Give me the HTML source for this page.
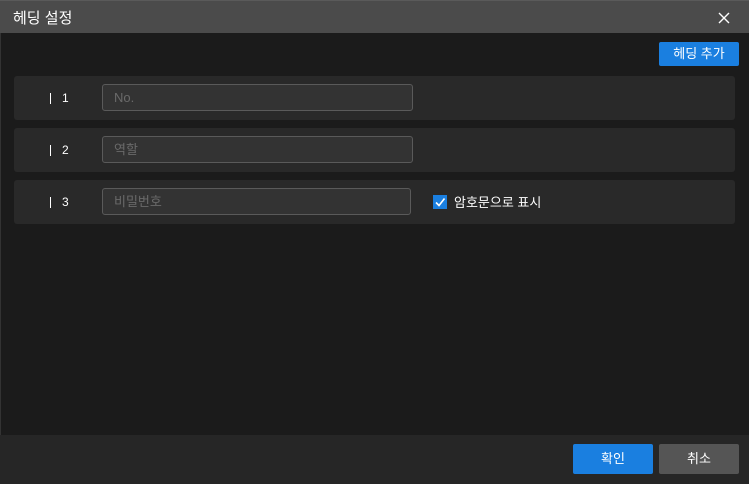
<!DOCTYPE html>
<html><head><meta charset="utf-8"><style>
body{margin:0;width:749px;height:484px;background:#1b1b1b;font-family:"Liberation Sans","Noto Sans CJK KR",sans-serif;position:relative;overflow:hidden;color:#fff}
.title{position:absolute;left:0;top:0;width:749px;height:33px;background:#4b4b4b;border-top:1px solid #5a5a5a;box-sizing:border-box}
.title span{position:absolute;left:13px;top:6px;font-size:15px;color:#fff}
.x{position:absolute;left:717px;top:10px}
.add{position:absolute;left:659px;top:42px;width:80px;height:24px;background:#1a7fe0;border-radius:2px;font-size:13px;text-align:center;line-height:24px}
.row{position:absolute;left:14px;width:721px;height:44px;background:#292929;border-radius:3px}
.bar{position:absolute;left:36px;top:17px;width:1px;height:11px;background:#fff}
.num{position:absolute;left:48px;top:15px;font-size:12px}
.inp{position:absolute;left:88px;top:8px;width:311px;height:27px;border:1px solid #5a5a5a;border-radius:3px;background:#333;box-sizing:border-box;font-size:13px;color:#6a6a6a;padding-left:11px;line-height:26px}
.cb{position:absolute;left:419px;top:15px;width:14px;height:14px;background:#1a7fe0}
.cbl{position:absolute;left:440px;top:12px;font-size:13px}
.foot{position:absolute;left:0;top:435px;width:749px;height:49px;background:#262626}
.btn{position:absolute;top:9px;width:80px;height:30px;border-radius:2px;font-size:13px;text-align:center;line-height:30px}
.edge{position:absolute;left:0;top:33px;width:1px;height:451px;background:#333}
</style></head><body>
<div class="title"><span>헤딩 설정</span>
<svg class="x" width="14" height="14" viewBox="0 0 14 14"><path d="M2 2L12 12M12 2L2 12" stroke="#fff" stroke-width="1.4"/></svg></div>
<div class="edge"></div>
<div class="add">헤딩 추가</div>
<div class="row" style="top:76px"><div class="bar"></div><div class="num">1</div><div class="inp">No.</div></div>
<div class="row" style="top:128px"><div class="bar"></div><div class="num">2</div><div class="inp">역할</div></div>
<div class="row" style="top:180px"><div class="bar"></div><div class="num">3</div><div class="inp" style="width:309px">비밀번호</div>
<div class="cb"><svg width="14" height="14" viewBox="0 0 14 14"><path d="M3 7.5L6 10.5L11.5 3.5" stroke="#fff" stroke-width="1.6" fill="none"/></svg></div><div class="cbl">암호문으로 표시</div></div>
<div class="foot">
<div class="btn" style="left:573px;background:#1a7fe0">확인</div>
<div class="btn" style="left:659px;background:#555">취소</div>
</div>
</body></html>
